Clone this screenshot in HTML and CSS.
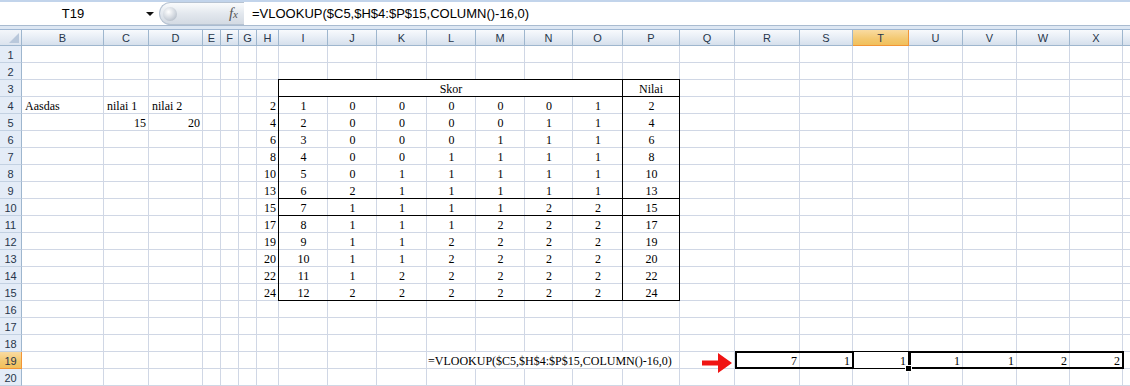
FILE: index.html
```html
<!DOCTYPE html>
<html lang="en">
<head>
    <meta charset="UTF-8">
    <meta name="viewport" content="width=device-width, initial-scale=1.0">
    <title>Book1 - VLOOKUP</title>
    <link rel="stylesheet" href="styles.css">
</head>
<body>
    <div class="top">
        <div class="formula-row">
            <div class="name-box">
                <span class="name-value">T19</span>
                <span class="caret"></span>
            </div>
            <div class="fx-pill">
                <span class="knob"></span>
                <span class="fx">f<span class="fx-x">x</span></span>
            </div>
            <div class="formula-input">=VLOOKUP($C5,$H$4:$P$15,COLUMN()-16,0)</div>
        </div>
    </div>
    <div class="sheet">
        <div class="grid cells" id="cells"></div>
        <div class="grid marks">
            <div class="skor">Skor</div>
            <div class="nilai">Nilai</div>
            <div class="score-split"></div>
            <div class="row-ten"></div>
            <div class="table-box"></div>
            <div class="active-cell"><span class="fill-handle"></span></div>
            <div class="pick pick-left"></div>
            <div class="pick pick-right"></div>
        </div>
    </div>
    <script>
        const cells = document.getElementById('cells');
        const columns = 'BCDEFGHIJKLMNOPQRSTUVWXY'.split('');
        const values = {
            B4: 'Aasdas', C4: 'nilai 1', D4: 'nilai 2',
            C5: 15, D5: 20
        };

        // H..P for rows 4 to 15
        const scores = [
            [2, 1, 0, 0, 0, 0, 0, 1, 2],
            [4, 2, 0, 0, 0, 0, 1, 1, 4],
            [6, 3, 0, 0, 0, 1, 1, 1, 6],
            [8, 4, 0, 0, 1, 1, 1, 1, 8],
            [10, 5, 0, 1, 1, 1, 1, 1, 10],
            [13, 6, 2, 1, 1, 1, 1, 1, 13],
            [15, 7, 1, 1, 1, 1, 2, 2, 15],
            [17, 8, 1, 1, 1, 2, 2, 2, 17],
            [19, 9, 1, 1, 2, 2, 2, 2, 19],
            [20, 10, 1, 1, 2, 2, 2, 2, 20],
            [22, 11, 1, 2, 2, 2, 2, 2, 22],
            [24, 12, 2, 2, 2, 2, 2, 2, 24]
        ];
        scores.forEach((row, i) => {
            'HIJKLMNOP'.split('').forEach((col, j) => {
                values[col + (4 + i)] = row[j];
            });
        });
        const lookup = [7, 1, 1, 1, 1, 2, 2];
        'RSTUVWX'.split('').forEach((col, j) => {
            values[col + '19'] = lookup[j];
        });

        const arrow = '<svg class="arrow" width="30" height="22" viewBox="0 0 30 22">' +
            '<path d="M0 8.5 H16 V1 L30 11 L16 21 V13.5 H0 Z" fill="#f01414"/></svg>';

        function addCell(className, text) {
            const div = document.createElement('div');
            div.className = className;
            if (text !== undefined) div.textContent = text;
            cells.appendChild(div);
            return div;
        }

        addCell('corner');
        // last column is only a sliver, its letter is off screen
        columns.forEach(col => addCell('col-hdr' + (col === 'T' ? ' active' : ''), col === 'Y' ? '' : col));

        for (let r = 1; r <= 20; r++) {
            addCell('row-hdr' + (r === 19 ? ' active' : ''), r);
            columns.forEach(col => {
                const value = values[col + r];
                let cls = 'cell';
                if (typeof value === 'number') {
                    cls += ('IJKLMNOP'.includes(col) && r >= 4 && r <= 15) ? ' mid' : ' num';
                }
                if (r === 19 && 'LMNO'.includes(col)) cls += ' spill';
                if (col === 'Q' && r === 19) cls += ' arrow-cell';
                const cell = addCell(cls, value);
                if (col === 'L' && r === 19) cell.textContent = '=VLOOKUP($C5,$H$4:$P$15,COLUMN()-16,0)';
                if (col === 'Q' && r === 19) cell.innerHTML = arrow;
            });
        }
    </script>
</body>
</html>
```

FILE: styles.css
```css
* {
    box-sizing: border-box;
}
body {
    margin: 0;
    width: 1130px;
    height: 386px;
    overflow: hidden;
    background: #fff;
    font-family: "Liberation Sans", Arial, sans-serif;
}
.top {
    height: 30px;
    background: #dde7f3;
    border-top: 2px solid #c2d4eb;
    border-bottom: 1px solid #9fb7d3;
}
.formula-row {
    display: flex;
    height: 24px;
    background: #fff;
    border-bottom: 1px solid #a9bbd0;
}
.name-box {
    width: 159px;
    display: flex;
    align-items: center;
}
.name-value {
    width: 146px;
    text-align: center;
    font-size: 13px;
    color: #000;
}
.caret {
    width: 0;
    height: 0;
    border-left: 4px solid transparent;
    border-right: 4px solid transparent;
    border-top: 4px solid #111;
}
.fx-pill {
    width: 85px;
    display: flex;
    align-items: center;
    justify-content: space-between;
    padding: 0 6px 0 3px;
    border: 1px solid #b7c3d2;
    border-right: none;
    border-radius: 12px 0 0 12px;
    background: linear-gradient(#fafbfc, #e3e8ee 50%, #d3dae3);
}
.knob {
    width: 14px;
    height: 14px;
    border-radius: 50%;
    background: radial-gradient(circle at 40% 35%, #ffffff, #cfd5dd 55%, #a1abb8);
}
.fx {
    font: italic 15px "Liberation Serif", serif;
    color: #555;
}
.fx-x {
    font-size: 11px;
}
.formula-input {
    flex: 1;
    display: flex;
    align-items: center;
    padding-left: 8px;
    font-size: 13px;
    color: #000;
    white-space: nowrap;
}

/* cells and the border layer share one grid */
.sheet {
    display: grid;
    font-family: "Liberation Serif", "Times New Roman", serif;
    font-size: 12px;
    color: #000;
}
.grid {
    grid-area: 1 / 1;
    display: grid;
    grid-template-columns: 22px 82px 45px 54px 18px 18px 18px 22px 49px 49px 50px 49px 49px 48px 50px 57px 55px 65px 53px 56px 54px 54px 53px 53px 60px;
    grid-template-rows: 16px repeat(20, 17px);
}
.corner {
    display: flex;
    justify-content: flex-end;
    align-items: flex-end;
    padding: 0 2px 2px 0;
    background: linear-gradient(#f3f6fa, #dbe3ee);
    border-right: 1px solid #9eb6ce;
    border-bottom: 1px solid #9eb6ce;
}
.corner::after {
    content: "";
    width: 0;
    height: 0;
    border-left: 10px solid transparent;
    border-bottom: 10px solid #b9c8db;
}
.col-hdr,
.row-hdr {
    display: flex;
    align-items: center;
    justify-content: center;
    font-family: "Liberation Sans", Arial, sans-serif;
    font-size: 11px;
    color: #27364b;
    border-right: 1px solid #9eb6ce;
    border-bottom: 1px solid #9eb6ce;
}
.col-hdr {
    background: linear-gradient(#f8fafd, #e4ebf4 60%, #d6e0ec);
}
.row-hdr {
    background: #e4ecf7;
    border-bottom-color: #c3d1e2;
    padding-top: 1px;
}
.col-hdr.active,
.row-hdr.active {
    background: linear-gradient(#f9dba1, #f3c870 60%, #f1c05c);
    border-color: #f29536;
}
.cell {
    border-right: 1px solid #d0d7e5;
    border-bottom: 1px solid #d0d7e5;
    padding: 2px 2px 0 3px;
    line-height: 15px;
    white-space: nowrap;
}
.cell.num {
    text-align: right;
}
.cell.mid {
    text-align: center;
}
.cell.spill {
    border-right-color: transparent;
    padding-left: 1px;
}
.arrow-cell {
    display: flex;
    justify-content: flex-end;
    align-items: flex-start;
    padding: 0 2px 0 0;
}
.arrow {
    flex-shrink: 0;
}
.skor {
    grid-column: 9 / 16;
    grid-row: 4;
    background: #fff;
    text-align: center;
    padding-top: 2px;
    line-height: 15px;
    border-bottom: 1px solid #000;
}
.nilai {
    grid-column: 16;
    grid-row: 4;
    background: #fff;
    text-align: center;
    padding-top: 2px;
    line-height: 15px;
    border-right: 1px solid #d0d7e5;
    border-bottom: 1px solid #000;
}
.score-split {
    grid-column: 9 / 16;
    grid-row: 4 / 17;
    border-right: 1px solid #000;
}
.row-ten {
    grid-column: 9 / 17;
    grid-row: 11;
    margin-top: -1px;
    border-top: 1px solid #000;
    border-bottom: 1px solid #000;
}
.table-box {
    grid-column: 9 / 17;
    grid-row: 4 / 17;
    margin: -1px 0 0 -1px;
    border: 1px solid #000;
}
.active-cell {
    position: relative;
    grid-column: 20;
    grid-row: 20;
    margin-top: -1px;
    border: 1px solid #000;
}
.fill-handle {
    position: absolute;
    right: -4px;
    bottom: -4px;
    width: 7px;
    height: 7px;
    background: #000;
    border: 1px solid #fff;
}
.pick {
    grid-row: 20;
    margin: -1px -1px 0 0;
    border: 2px solid #000;
}
.pick-left {
    grid-column: 18 / 20;
}
.pick-right {
    grid-column: 21 / 25;
}
```
